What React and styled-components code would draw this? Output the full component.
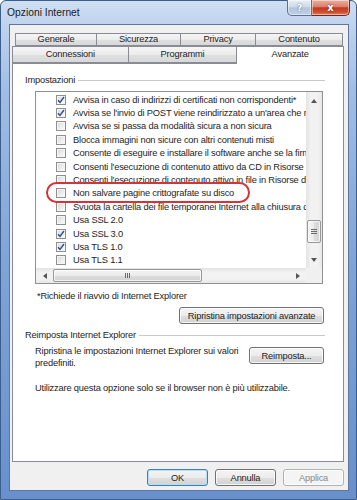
import styled, { createGlobalStyle } from 'styled-components'

const GlobalStyle = createGlobalStyle`
  html, body {
    margin: 0;
    padding: 0;
    background: #fff;
  }
  body {
    font-family: "Liberation Sans", Arial, sans-serif;
    font-size: 9.3px;
    letter-spacing: -0.18px;
    color: #1e1e1e;
  }
`

const Window = styled.div`
  width: 357px;
  height: 500px;
  box-sizing: border-box;
  display: flex;
  flex-direction: column;
  border: 1px solid #3d5d8c;
  border-radius: 6px 6px 0 0;
  padding: 0 7px 8px 8px;
  background: linear-gradient(
    to bottom,
    #d0dff2 0,
    #bfd3ed 24px,
    #a1bde5 90px,
    #7fa4d8 260px,
    #6890cd 100%
  );
`

const TitleBar = styled.div`
  height: 23px;
  display: flex;
  justify-content: space-between;
  align-items: flex-start;
`

const Title = styled.div`
  margin: 6px 0 0 -2px;
  font-size: 10.3px;
  letter-spacing: 0;
  line-height: 12px;
  color: #1b1b1b;
`

const CaptionButtons = styled.div`
  display: flex;
  margin: -1px -1px 0 0;
`

const CaptionButton = styled.div`
  width: ${(p) => p.$w}px;
  height: 16px;
  box-sizing: border-box;
  display: flex;
  align-items: center;
  justify-content: center;
  border: 1px solid ${(p) => (p.$close ? '#6e2a20' : '#5d7193')};
  border-top: none;
  border-left-width: ${(p) => (p.$close ? 0 : 1)}px;
  border-radius: ${(p) => (p.$close ? '0 0 5px 0' : '0 0 0 5px')};
  background: ${(p) =>
    p.$close
      ? 'linear-gradient(to bottom, #eab0a2 0, #d9806d 45%, #c4391f 52%, #cf4d2f 80%, #e0805e 100%)'
      : 'linear-gradient(to bottom, #e8eef7 0, #cfdbea 45%, #b3c5dc 52%, #bfd0e5 100%)'};
  box-shadow: inset 0 0 0 1px rgba(255, 255, 255, 0.45);
  color: #fff;
  font-family: "DejaVu Sans", sans-serif;
  font-weight: bold;
  font-size: ${(p) => (p.$close ? 10 : 9)}px;
  letter-spacing: 0;
  text-shadow: 0 0 2px ${(p) => (p.$close ? '#5a1a10' : '#4b5d7d')};
`

const Client = styled.div`
  flex: 1;
  display: flex;
  flex-direction: column;
  border: 1px solid #5f779c;
  background: #f0f0f0;
  padding: 8px 4px 0 2px;
`

const TabRow = styled.div`
  display: flex;
  padding-left: ${(p) => p.$indent}px;
`

const Tab = styled.div`
  width: ${(p) => p.$w}px;
  height: ${(p) => (p.$active ? p.$h + 1 : p.$h)}px;
  box-sizing: border-box;
  display: flex;
  align-items: center;
  justify-content: center;
  border: 1px solid #898c95;
  border-bottom: ${(p) => (p.$active ? 'none' : '1px solid #898c95')};
  margin-left: -1px;
  margin-bottom: ${(p) => (p.$active ? -1 : 0)}px;
  position: relative;
  z-index: ${(p) => (p.$active ? 1 : 0)};
  background: ${(p) =>
    p.$active
      ? '#fff'
      : 'linear-gradient(to bottom, #f5f5f5 0, #ececec 50%, #e0e0e0 51%, #d8d8d8 100%)'};
  line-height: 11px;
  padding-bottom: ${(p) => (p.$active ? 3 : 0)}px;

  &:first-child {
    margin-left: 0;
  }
`

const Panel = styled.div`
  height: 399px;
  box-sizing: border-box;
  border: 1px solid #898c95;
  background: #fff;
  padding: 10px 19px 0 12px;
  display: flex;
  flex-direction: column;
`

const GroupHeader = styled.div`
  display: flex;
  align-items: center;
  gap: 3px;
  line-height: 12px;
  margin-top: ${(p) => p.$top || 0}px;

  &::after {
    content: '';
    flex: 1;
    height: 1px;
    margin-right: -1px;
    background: #c9c9c9;
  }
`

const ListBox = styled.div`
  margin: 5px 0 0 10px;
  width: 288px;
  height: 193px;
  box-sizing: border-box;
  border: 1px solid #8e9094;
  display: grid;
  grid-template-columns: 1fr 16px;
  grid-template-rows: 1fr 15px;
`

const Rows = styled.div`
  overflow: hidden;
  padding-top: 1px;
`

const Row = styled.div`
  height: 13.4px;
  display: flex;
  align-items: center;
  padding-left: 20px;
  white-space: nowrap;
  position: relative;

  ${(p) =>
    p.$highlight &&
    `
    z-index: 1;
    &::before {
      content: '';
      position: absolute;
      left: 0;
      right: 0;
      top: -3px;
      bottom: -3px;
      background: #fff;
      z-index: -1;
    }
    &::after {
      content: '';
      position: absolute;
      left: 10px;
      top: -5px;
      width: 204px;
      height: 21px;
      box-sizing: border-box;
      border: 2px solid #d6323a;
      border-radius: 11px;
    }
  `}
`

const Box = styled.span`
  flex: none;
  width: 10px;
  height: 10px;
  box-sizing: border-box;
  margin-right: 7px;
  border: 1px solid #8f8f8f;
  background: linear-gradient(135deg, #d6d6d6 0, #ededed 55%, #fbfbfb 100%);
  box-shadow: inset 0 0 0 1px #f6f6f6;
  display: flex;
  align-items: center;
  justify-content: center;

  svg {
    display: block;
  }
`

const VScroll = styled.div`
  display: flex;
  flex-direction: column;
  background: linear-gradient(to right, #e3e3e3 0, #f2f2f2 30%, #f2f2f2 70%, #e8e8e8 100%);
`

const HScroll = styled.div`
  display: flex;
  background: linear-gradient(to bottom, #e3e3e3 0, #f2f2f2 30%, #f2f2f2 70%, #e8e8e8 100%);
`

const Corner = styled.div`
  background: #f0f0f0;
`

const ArrowButton = styled.div`
  flex: none;
  width: ${(p) => (p.$horizontal ? '17px' : 'auto')};
  height: ${(p) => (p.$horizontal ? 'auto' : '17px')};
  display: flex;
  align-items: center;
  justify-content: center;
`

const Track = styled.div`
  flex: 1;
  display: flex;
  flex-direction: ${(p) => (p.$horizontal ? 'row' : 'column')};
  align-items: stretch;
`

const Thumb = styled.div`
  flex: none;
  box-sizing: border-box;
  border: 1px solid #979797;
  border-radius: 2px;
  margin: ${(p) => (p.$horizontal ? '1px 0' : '0 1px')};
  background: ${(p) =>
    p.$horizontal
      ? 'linear-gradient(to bottom, #f5f5f5 0, #ebebeb 50%, #dcdcdc 51%, #d4d4d4 100%)'
      : 'linear-gradient(to right, #f5f5f5 0, #ebebeb 50%, #dcdcdc 51%, #d4d4d4 100%)'};
  box-shadow: inset 0 0 0 1px rgba(255, 255, 255, 0.7);
  display: flex;
  align-items: center;
  justify-content: center;
`

const Note = styled.div`
  margin: 6px 0 0 12px;
  line-height: 12px;
`

const Button = styled.div`
  width: ${(p) => p.$w}px;
  height: 17px;
  box-sizing: border-box;
  display: flex;
  align-items: center;
  justify-content: center;
  border: 1px solid ${(p) => (p.$default ? '#3c7fb1' : p.$disabled ? '#adb2b5' : '#707070')};
  border-radius: 3px;
  background: ${(p) =>
    p.$disabled
      ? '#f4f4f4'
      : 'linear-gradient(to bottom, #f4f4f4 0, #ececec 50%, #dfdfdf 51%, #d2d2d2 100%)'};
  box-shadow: inset 0 0 0 1px
    ${(p) => (p.$default ? '#b4def6' : 'rgba(255, 255, 255, 0.75)')};
  color: ${(p) => (p.$disabled ? '#8a8a8a' : '#1e1e1e')};
  align-self: ${(p) => p.$align || 'auto'};
  margin-top: ${(p) => p.$top || 0}px;
`

const ResetRow = styled.div`
  display: flex;
  justify-content: space-between;
  align-items: flex-start;
  margin-top: 5px;
  padding-left: 10px;
`

const ResetText = styled.div`
  width: 212px;
  line-height: 11.5px;
`

const Footer = styled.div`
  display: flex;
  justify-content: flex-end;
  gap: 7px;
  margin-top: 7px;
`

const settings = [
  { label: 'Avvisa in caso di indirizzi di certificati non corrispondenti*', checked: true },
  { label: "Avvisa se l'invio di POST viene reindirizzato a un'area che non consente l'invio", checked: true },
  { label: 'Avvisa se si passa da modalità sicura a non sicura' },
  { label: 'Blocca immagini non sicure con altri contenuti misti' },
  { label: 'Consente di eseguire e installare il software anche se la firma non è valida' },
  { label: "Consenti l'esecuzione di contenuto attivo da CD in Risorse del computer*" },
  { label: "Consenti l'esecuzione di contenuto attivo in file in Risorse del computer*" },
  { label: 'Non salvare pagine crittografate su disco', highlight: true },
  { label: 'Svuota la cartella dei file temporanei Internet alla chiusura del browser' },
  { label: 'Usa SSL 2.0' },
  { label: 'Usa SSL 3.0', checked: true },
  { label: 'Usa TLS 1.0', checked: true },
  { label: 'Usa TLS 1.1' },
]

const backTabs = [
  { name: 'Generale', w: 82 },
  { name: 'Sicurezza', w: 85 },
  { name: 'Privacy', w: 76 },
  { name: 'Contenuto', w: 88 },
]

const frontTabs = [
  { name: 'Connessioni', w: 117 },
  { name: 'Programmi', w: 110 },
  { name: 'Avanzate', w: 108, active: true },
]

function Arrow({ dir }) {
  const paths = {
    up: 'M0 4 L3 0 L6 4 Z',
    down: 'M0 0 L6 0 L3 4 Z',
    left: 'M4 0 L4 6 L0 3 Z',
    right: 'M0 0 L4 3 L0 6 Z',
  }
  const vertical = dir === 'up' || dir === 'down'
  return (
    <svg width={vertical ? 6 : 4} height={vertical ? 4 : 6} viewBox={vertical ? '0 0 6 4' : '0 0 4 6'}>
      <path d={paths[dir]} fill="#555" />
    </svg>
  )
}

function Grip({ horizontal }) {
  const lines = [0, 2, 4]
  return horizontal ? (
    <svg width="6" height="5" viewBox="0 0 6 5">
      {lines.map((x) => (
        <rect key={x} x={x} y="0" width="1" height="5" fill="#6b6b6b" />
      ))}
    </svg>
  ) : (
    <svg width="6" height="6" viewBox="0 0 6 6">
      {lines.map((y) => (
        <rect key={y} x="0" y={y} width="6" height="1" fill="#6b6b6b" />
      ))}
    </svg>
  )
}

function CheckBox({ checked }) {
  return (
    <Box>
      {checked && (
        <svg width="8" height="8" viewBox="0 0 8 8">
          <path d="M1 4.2 L3 6.4 L7 1" fill="none" stroke="#34518e" strokeWidth="1.5" />
        </svg>
      )}
    </Box>
  )
}

export default function App() {
  return (
    <>
      <GlobalStyle />
      <Window>
        <TitleBar>
          <Title>Opzioni Internet</Title>
          <CaptionButtons>
            <CaptionButton $w={25}>?</CaptionButton>
            <CaptionButton $w={38} $close>
              x
            </CaptionButton>
          </CaptionButtons>
        </TitleBar>

        <Client>
          <TabRow $indent={3}>
            {backTabs.map((t) => (
              <Tab key={t.name} $w={t.w} $h={13}>
                {t.name}
              </Tab>
            ))}
          </TabRow>
          <TabRow $indent={0}>
            {frontTabs.map((t) => (
              <Tab key={t.name} $w={t.w} $h={17} $active={t.active}>
                {t.name}
              </Tab>
            ))}
          </TabRow>

          <Panel>
            <GroupHeader>Impostazioni</GroupHeader>
            <ListBox>
              <Rows>
                {settings.map((s) => (
                  <Row key={s.label} $highlight={s.highlight}>
                    <CheckBox checked={s.checked} />
                    {s.label}
                  </Row>
                ))}
              </Rows>
              <VScroll>
                <ArrowButton>
                  <Arrow dir="up" />
                </ArrowButton>
                <Track>
                  <Thumb style={{ marginTop: 111, height: 23 }}>
                    <Grip />
                  </Thumb>
                </Track>
                <ArrowButton>
                  <Arrow dir="down" />
                </ArrowButton>
              </VScroll>
              <HScroll>
                <ArrowButton $horizontal>
                  <Arrow dir="left" />
                </ArrowButton>
                <Track $horizontal>
                  <Thumb $horizontal style={{ width: 149 }}>
                    <Grip horizontal />
                  </Thumb>
                </Track>
                <ArrowButton $horizontal>
                  <Arrow dir="right" />
                </ArrowButton>
              </HScroll>
              <Corner />
            </ListBox>

            <Note>*Richiede il riavvio di Internet Explorer</Note>
            <Button $w={145} $align="flex-end" $top={5}>
              Ripristina impostazioni avanzate
            </Button>

            <GroupHeader $top={5}>Reimposta Internet Explorer</GroupHeader>
            <ResetRow>
              <ResetText>Ripristina le impostazioni Internet Explorer sui valori predefiniti.</ResetText>
              <Button $w={75} $top={1}>
                Reimposta...
              </Button>
            </ResetRow>
            <Note style={{ marginTop: 13, marginLeft: 10 }}>
              Utilizzare questa opzione solo se il browser non è più utilizzabile.
            </Note>
          </Panel>

          <Footer>
            <Button $w={61} $default>
              OK
            </Button>
            <Button $w={61}>Annulla</Button>
            <Button $w={61} $disabled>
              Applica
            </Button>
          </Footer>
        </Client>
      </Window>
    </>
  )
}
